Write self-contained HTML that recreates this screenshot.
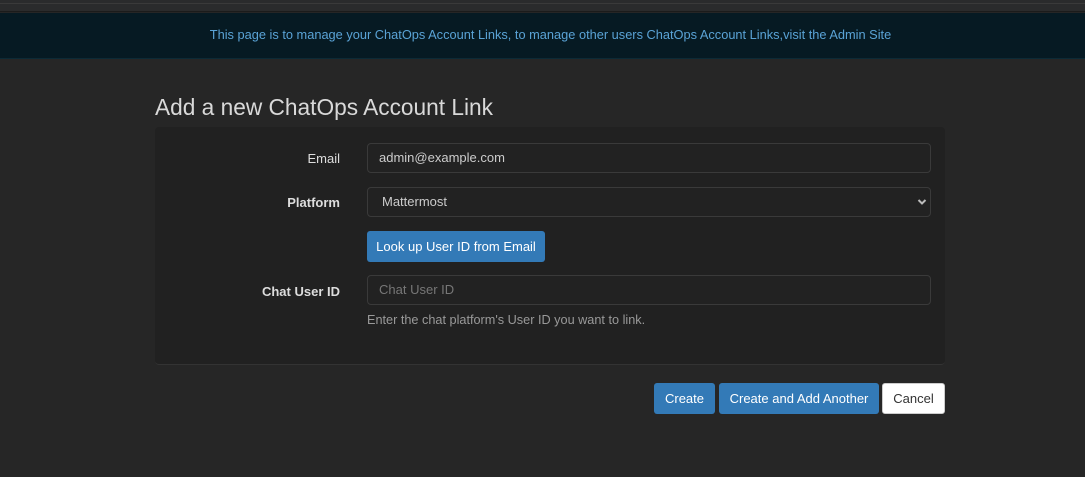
<!DOCTYPE html>
<html><head><meta charset="utf-8"><style>
*{box-sizing:border-box;margin:0;padding:0}
body{width:1085px;height:477px;background:#262626;font-family:"Liberation Sans",Arial,sans-serif;position:relative;overflow:hidden}
.top{position:absolute;left:0;top:0;width:1085px;height:12px;background:#2a2b2c;border-bottom:1px solid #1b1b1b}
.top:before{content:"";position:absolute;left:0;top:3px;width:100%;height:1px;background:#3a3a3a}
.banner{position:absolute;left:0;top:13px;width:1085px;height:46px;background:#061a23;color:#5aa3d6;font-size:12.8px;text-align:center;line-height:44px;border-bottom:1px solid #0c2a36;padding-left:16px}
h1{position:absolute;left:155px;top:94px;font-size:22.7px;font-weight:normal;color:#d9d9d9}
.panel{position:absolute;left:155px;top:127px;width:790px;height:238px;background:#212121;border-radius:4px;border-bottom:1px solid #333}
.lbl{position:absolute;right:745px;font-size:13px;color:#ddd;text-align:right}
.lbl.b{font-weight:bold}
.inp{position:absolute;left:367px;width:564px;height:30px;border:1px solid #3a3a3a;border-radius:4px;background:#222;color:#ccc;font-size:13px;padding-left:11px;line-height:28px}
.btn{position:absolute;height:31px;border-radius:3px;background:#337ab7;color:#fff;font-size:13px;line-height:31px;text-align:center}
.help{position:absolute;left:367px;top:313px;font-size:12.7px;color:#999}
</style></head><body>
<div class="top"></div>
<div class="banner">This page is to manage your ChatOps Account Links, to manage other users ChatOps Account Links,visit the Admin Site</div>
<h1>Add a new ChatOps Account Link</h1>
<div class="panel"></div>
<div class="lbl" style="top:151px">Email</div>
<div class="inp" style="top:143px">admin@example.com</div>
<div class="lbl b" style="top:195px">Platform</div>
<div class="inp" style="top:187px;padding-left:14px">Mattermost
<svg style="position:absolute;right:3px;top:10px" width="10" height="8" viewBox="0 0 10 8"><path d="M1.5 2 L5 5.5 L8.5 2" stroke="#bbb" stroke-width="2" fill="none"/></svg></div>
<div class="btn" style="left:367px;top:231px;width:178px">Look up User ID from Email</div>
<div class="lbl b" style="top:284px">Chat User ID</div>
<div class="inp" style="top:275px;color:#777">Chat User ID</div>
<div class="help">Enter the chat platform's User ID you want to link.</div>
<div class="btn" style="left:654px;top:383px;width:61px">Create</div>
<div class="btn" style="left:719px;top:383px;width:160px">Create and Add Another</div>
<div class="btn" style="left:882px;top:383px;width:63px;background:#fff;color:#333;border:1px solid #ccc;line-height:29px">Cancel</div>
</body></html>
